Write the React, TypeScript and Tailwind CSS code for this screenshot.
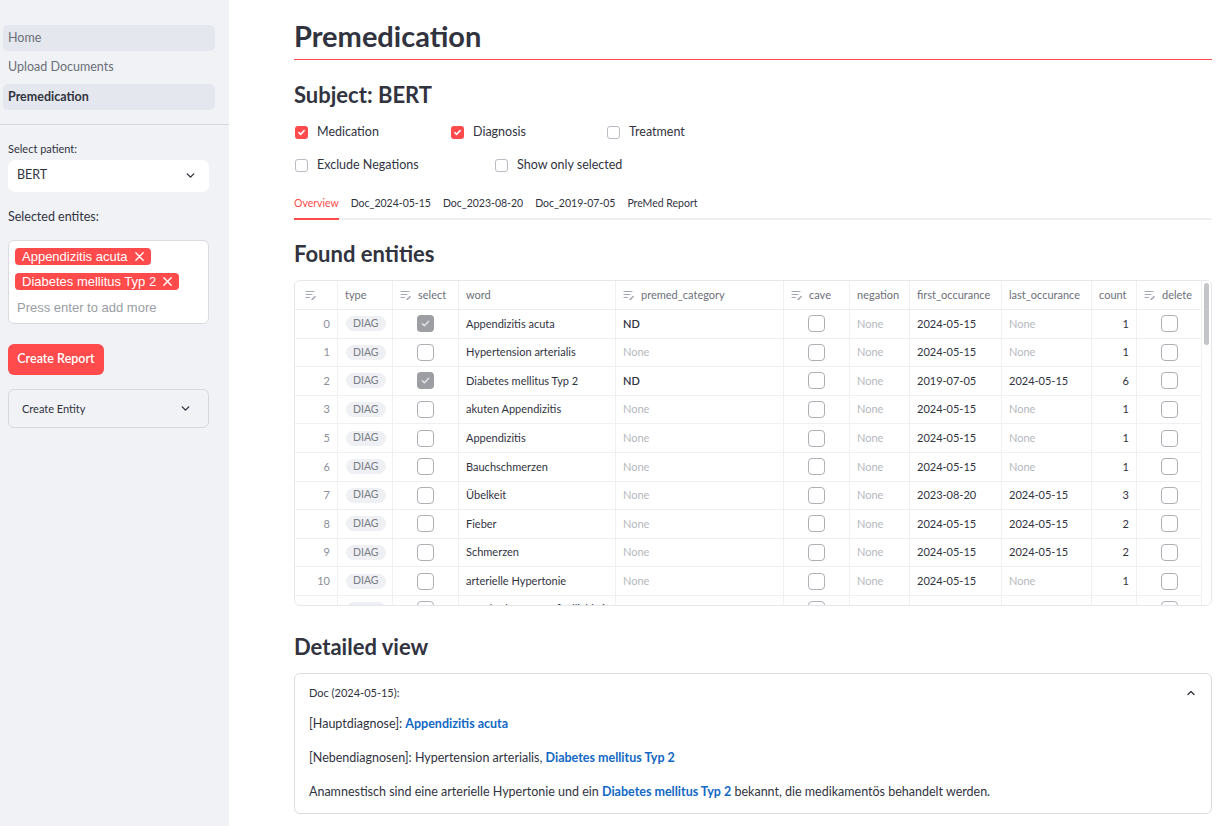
import React from "react";

const cols = [43, 55, 66, 157, 168, 66, 60, 92, 90, 45, 66];

function EditIcon() {
  return (
    <svg width="12" height="10" viewBox="0 0 12 10" className="shrink-0">
      <path d="M1 1.5h8M1 4.5h6M1 7.5h3.5" stroke="#a3a8b4" strokeWidth="1.1" strokeLinecap="round" />
      <path d="M6.3 9.3l3.6-3.6 1.1 1.1-3.6 3.6H6.3z" fill="#a3a8b4" />
    </svg>
  );
}

function Chevron({ up = false, size = 12, color = "#31333f" }: { up?: boolean; size?: number; color?: string }) {
  return (
    <svg width={size} height={size} viewBox="0 0 24 24" fill="none" stroke={color} strokeWidth="2.6" strokeLinecap="round" strokeLinejoin="round">
      {up ? <path d="M6 15l6-6 6 6" /> : <path d="M6 9l6 6 6-6" />}
    </svg>
  );
}

function RedCheck({ checked }: { checked: boolean }) {
  return checked ? (
    <span className="w-[13px] h-[13px] rounded-[3px] bg-[#ff4b4b] flex items-center justify-center">
      <svg width="9" height="9" viewBox="0 0 12 12" fill="none" stroke="white" strokeWidth="2" strokeLinecap="round" strokeLinejoin="round">
        <path d="M2.5 6.2l2.3 2.3 4.7-5" />
      </svg>
    </span>
  ) : (
    <span className="w-[13px] h-[13px] rounded-[3px] bg-white border border-[#b9bcc2]" />
  );
}

function TableCheck({ checked }: { checked: boolean }) {
  return checked ? (
    <span className="w-[17px] h-[17px] rounded-[4px] bg-[#9c9ea3] flex items-center justify-center">
      <svg width="11" height="11" viewBox="0 0 12 12" fill="none" stroke="#e8e8ea" strokeWidth="1.4" strokeLinecap="round" strokeLinejoin="round">
        <path d="M2.5 6.2l2.3 2.3 4.7-5" />
      </svg>
    </span>
  ) : (
    <span className="w-[17px] h-[17px] rounded-[4px] bg-white border border-[#aeb0b5]" />
  );
}

type Row = {
  i: number;
  sel: boolean;
  word: string;
  cat: string | null;
  first: string;
  last: string | null;
  count: number;
};

const rows: Row[] = [
  { i: 0, sel: true, word: "Appendizitis acuta", cat: "ND", first: "2024-05-15", last: null, count: 1 },
  { i: 1, sel: false, word: "Hypertension arterialis", cat: null, first: "2024-05-15", last: null, count: 1 },
  { i: 2, sel: true, word: "Diabetes mellitus Typ 2", cat: "ND", first: "2019-07-05", last: "2024-05-15", count: 6 },
  { i: 3, sel: false, word: "akuten Appendizitis", cat: null, first: "2024-05-15", last: null, count: 1 },
  { i: 5, sel: false, word: "Appendizitis", cat: null, first: "2024-05-15", last: null, count: 1 },
  { i: 6, sel: false, word: "Bauchschmerzen", cat: null, first: "2024-05-15", last: null, count: 1 },
  { i: 7, sel: false, word: "Übelkeit", cat: null, first: "2023-08-20", last: "2024-05-15", count: 3 },
  { i: 8, sel: false, word: "Fieber", cat: null, first: "2024-05-15", last: "2024-05-15", count: 2 },
  { i: 9, sel: false, word: "Schmerzen", cat: null, first: "2024-05-15", last: "2024-05-15", count: 2 },
  { i: 10, sel: false, word: "arterielle Hypertonie", cat: null, first: "2024-05-15", last: null, count: 1 },
  { i: 11, sel: false, word: "Druckschmerzempfindlichkeit", cat: null, first: "2024-05-15", last: null, count: 1 },
];

const cellBase = "h-full flex items-center border-r border-[#f0f0f2] px-[7px] overflow-hidden whitespace-nowrap";

function DataTable() {
  const grid = { gridTemplateColumns: cols.map((c) => c + "px").join(" ") };
  const headers: { label: string; icon?: boolean }[] = [
    { label: "", icon: true },
    { label: "type" },
    { label: "select", icon: true },
    { label: "word" },
    { label: "premed_category", icon: true },
    { label: "cave", icon: true },
    { label: "negation" },
    { label: "first_occurance" },
    { label: "last_occurance" },
    { label: "count" },
    { label: "delete", icon: true },
  ];
  return (
    <div className="mt-[12px] h-[326px] border border-[#e6e7eb] rounded-[6px] overflow-hidden flex bg-white">
      <div className="flex-1 overflow-hidden">
        <div className="grid h-[29px] border-b border-[#ececef] text-[11px] text-[#6d7079]" style={grid}>
          {headers.map((h, k) => (
            <div key={k} className={cellBase + " gap-[6px] " + (k === 0 ? "pl-[10px]" : "")}>
              {h.icon && <EditIcon />}
              {h.label && <span>{h.label}</span>}
            </div>
          ))}
        </div>
        {rows.map((r) => (
          <div key={r.i} className="grid h-[28.6px] border-b border-[#f0f0f2] text-[11px] text-[#31333f]" style={grid}>
            <div className={cellBase + " justify-end text-[#8b8e96]"}>{r.i}</div>
            <div className={cellBase + " px-[8px]"}>
              <span className="h-[15px] px-[7px] rounded-full bg-[#eff0f3] text-[#7a7d85] text-[10.5px] flex items-center">DIAG</span>
            </div>
            <div className={cellBase + " justify-center"}>
              <TableCheck checked={r.sel} />
            </div>
            <div className={cellBase}>{r.word}</div>
            <div className={cellBase}>
              {r.cat ? <span className="font-semibold">{r.cat}</span> : <span className="text-[#b5b8be]">None</span>}
            </div>
            <div className={cellBase + " justify-center"}>
              <TableCheck checked={false} />
            </div>
            <div className={cellBase + " text-[#b5b8be]"}>None</div>
            <div className={cellBase}>{r.first}</div>
            <div className={cellBase}>{r.last ? r.last : <span className="text-[#b5b8be]">None</span>}</div>
            <div className={cellBase + " justify-end"}>{r.count}</div>
            <div className={cellBase + " justify-center"}>
              <TableCheck checked={false} />
            </div>
          </div>
        ))}
      </div>
      <div className="w-[10px] border-l border-[#f0f0f2] pt-[2px] flex justify-center">
        <div className="w-[5px] h-[62px] rounded-full bg-[#c4c5c9]" />
      </div>
    </div>
  );
}

function Tag({ label }: { label: string }) {
  return (
    <span className="inline-flex items-center h-[17px] rounded-[4px] bg-[#ff4b4b] text-white pl-[7px] pr-[6px] text-[13px] [font-family:'Liberation_Sans',Arial,sans-serif]">
      {label}
      <svg width="11" height="11" viewBox="0 0 12 12" className="ml-[6px]" stroke="white" strokeWidth="1.5" strokeLinecap="round">
        <path d="M2 2l8 8M10 2l-8 8" />
      </svg>
    </span>
  );
}

function Sidebar() {
  return (
    <div className="w-[229px] shrink-0 h-full bg-[#f0f2f6] flex flex-col">
      <div className="pt-[25px] px-[3px] pr-[14px] flex flex-col text-[12.5px]">
        <div className="h-[26px] rounded-[5px] bg-[#e4e7ed] flex items-center px-[5px] text-[#6b6e78]">Home</div>
        <div className="h-[33px] flex items-center px-[5px] text-[#6b6e78]">Upload Documents</div>
        <div className="h-[26px] rounded-[5px] bg-[#e4e7ed] flex items-center px-[5px] font-bold text-[#31333f]">Premedication</div>
      </div>
      <div className="mt-[14px] h-px bg-[#d5d8de]" />
      <div className="px-[8px] pr-[20px] text-[#31333f]">
        <div className="mt-[16px] text-[11px]">Select patient:</div>
        <div className="mt-[2px] h-[32px] rounded-[7px] bg-white flex items-center justify-between pl-[9px] pr-[12px] text-[12.5px]">
          <span>BERT</span>
          <Chevron size={13} />
        </div>
        <div className="mt-[16px] text-[12.5px]">Selected entites:</div>
        <div className="mt-[14px] h-[84px] rounded-[6px] bg-white border border-[#d9dbe0] pt-[7px] px-[6px] flex flex-col items-start gap-[8px]">
          <Tag label="Appendizitis acuta" />
          <Tag label="Diabetes mellitus Typ 2" />
          <span className="pl-[2px] mt-[1px] text-[13px] text-[#9a9da4] [font-family:'Liberation_Sans',Arial,sans-serif] leading-[18px]">Press enter to add more</span>
        </div>
        <button className="mt-[20px] h-[31px] w-[96px] rounded-[6px] bg-[#ff4b4b] text-white text-[12.5px] font-semibold flex items-center justify-center">
          Create Report
        </button>
        <div className="mt-[14px] h-[39px] rounded-[6px] border border-[#d5d8de] flex items-center justify-between pl-[13px] pr-[16px] text-[11px]">
          <span>Create Entity</span>
          <Chevron size={13} />
        </div>
      </div>
    </div>
  );
}

function Blue({ children }: { children: React.ReactNode }) {
  return <span className="font-bold text-[#1268c4]">{children}</span>;
}

export default function App() {
  return (
    <div className="w-[1224px] h-[826px] overflow-hidden flex bg-white text-[#31333f] [font-family:Lato,sans-serif]">
      <Sidebar />
      <div className="w-[995px] pl-[65px] pr-[12px]">
        <h1 className="pt-[17px] text-[29px] leading-[38px] font-bold">Premedication</h1>
        <div className="mt-[4px] h-px bg-[#ff4b4b]" />
        <h2 className="mt-[21px] text-[22px] leading-[28px] font-bold">Subject: BERT</h2>
        <div className="mt-[14px] flex items-center h-[18px] text-[12.5px]">
          <label className="w-[157px] flex items-center gap-[9px] pl-[1px]"><RedCheck checked /> Medication</label>
          <label className="w-[156px] flex items-center gap-[9px]"><RedCheck checked /> Diagnosis</label>
          <label className="flex items-center gap-[9px]"><RedCheck checked={false} /> Treatment</label>
        </div>
        <div className="mt-[15px] flex items-center h-[18px] text-[12.5px]">
          <label className="w-[201px] flex items-center gap-[9px] pl-[1px]"><RedCheck checked={false} /> Exclude Negations</label>
          <label className="flex items-center gap-[9px]"><RedCheck checked={false} /> Show only selected</label>
        </div>
        <div className="mt-[21px] border-b-2 border-[#eeeff2] flex gap-[12px] text-[10.5px]">
          <div className="relative h-[23px] pt-[1px] leading-[14px] text-[#ff4b4b]">
            Overview
            <div className="absolute left-0 right-0 -bottom-[2px] h-[2px] bg-[#ff4b4b]" />
          </div>
          <div className="h-[23px] pt-[1px] leading-[14px]">Doc_2024-05-15</div>
          <div className="h-[23px] pt-[1px] leading-[14px]">Doc_2023-08-20</div>
          <div className="h-[23px] pt-[1px] leading-[14px]">Doc_2019-07-05</div>
          <div className="h-[23px] pt-[1px] leading-[14px]">PreMed Report</div>
        </div>
        <h2 className="mt-[20px] text-[22px] leading-[28px] font-bold">Found entities</h2>
        <DataTable />
        <h2 className="mt-[27px] text-[22px] leading-[28px] font-bold">Detailed view</h2>
        <div className="mt-[12px] border border-[#dcdde1] rounded-[6px] px-[14px] pt-[11px] pb-[12px]">
          <div className="flex items-center justify-between text-[11px]">
            <span>Doc (2024-05-15):</span>
            <Chevron up size={12} />
          </div>
          <p className="mt-[13px] text-[12.5px] leading-[18px]">
            [Hauptdiagnose]: <Blue>Appendizitis acuta</Blue>
          </p>
          <p className="mt-[16px] text-[12.5px] leading-[18px]">
            [Nebendiagnosen]: Hypertension arterialis, <Blue>Diabetes mellitus Typ 2</Blue>
          </p>
          <p className="mt-[16px] text-[12.5px] leading-[18px]">
            Anamnestisch sind eine arterielle Hypertonie und ein <Blue>Diabetes mellitus Typ 2</Blue> bekannt, die medikamentös behandelt werden.
          </p>
        </div>
      </div>
    </div>
  );
}
